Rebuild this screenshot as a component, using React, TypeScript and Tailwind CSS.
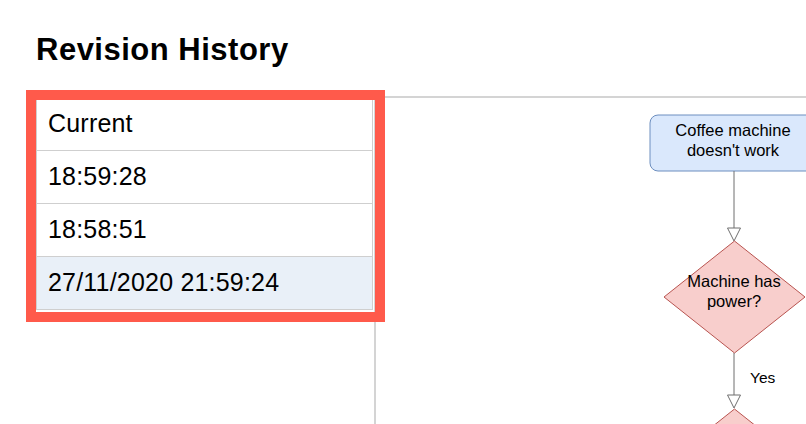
const revisions = [
  { label: "Current", selected: false },
  { label: "18:59:28", selected: false },
  { label: "18:58:51", selected: false },
  { label: "27/11/2020 21:59:24", selected: true },
];

function Diagram() {
  return (
    <svg
      className="absolute left-0 top-0"
      width="440"
      height="330"
      viewBox="0 0 440 330"
      style={{ fontFamily: '"Liberation Sans", Arial, sans-serif' }}
    >
      {/* start node */}
      <rect x="274" y="17" width="166" height="56" rx="8" fill="#dae8fc" stroke="#6c8ebf" strokeWidth="1" />
      <text x="357" y="38" fontSize="16.5" textAnchor="middle" fill="#000">
        Coffee machine
      </text>
      <text x="357" y="58" fontSize="16.5" textAnchor="middle" fill="#000">
        doesn't work
      </text>

      {/* edge 1 */}
      <line x1="358" y1="73" x2="358" y2="130" stroke="#6f6f6f" strokeWidth="1" />
      <polygon points="351.5,130 364.5,130 358,143" fill="#fff" stroke="#6f6f6f" strokeWidth="1" />

      {/* decision */}
      <polygon points="358.5,143 429,199 358.5,255 288,199" fill="#f8cecc" stroke="#b85450" strokeWidth="1" />
      <text x="358" y="189" fontSize="16.5" textAnchor="middle" fill="#000">
        Machine has
      </text>
      <text x="358" y="209" fontSize="16.5" textAnchor="middle" fill="#000">
        power?
      </text>

      {/* edge 2 */}
      <line x1="358" y1="255" x2="358" y2="297" stroke="#6f6f6f" strokeWidth="1" />
      <polygon points="351.5,297 364.5,297 358,310" fill="#fff" stroke="#6f6f6f" strokeWidth="1" />
      <text x="374" y="285" fontSize="15.5" fill="#000">
        Yes
      </text>

      {/* next decision (cut off) */}
      <polygon points="358.5,311 429,367 358.5,423 288,367" fill="#f8cecc" stroke="#b85450" strokeWidth="1" />
    </svg>
  );
}

export default function App() {
  return (
    <div
      className="relative h-[424px] w-[806px] overflow-hidden bg-white text-black"
      style={{ fontFamily: '"Liberation Sans", Arial, sans-serif' }}
    >
      <h1 className="pl-[36px] pt-[32px] text-[31px] font-bold leading-[36px] tracking-[0.5px]">
        Revision History
      </h1>

      <div className="mt-[28px] flex h-[328px]">
        <div className="w-[374px] shrink-0 pl-[36px]">
          <ul className="w-[337px] border border-[#cfcfcf]">
            {revisions.map((r, i) => (
              <li
                key={r.label}
                className={`flex h-[53px] items-center pl-[11px] text-[25px] tracking-[0.2px] ${
                  i > 0 ? "border-t border-[#cfcfcf]" : ""
                } ${r.selected ? "bg-[#e9f0f8]" : "bg-white"}`}
              >
                {r.label}
              </li>
            ))}
          </ul>
        </div>

        <div className="relative flex-1 overflow-hidden border-l-2 border-t-2 border-[#d4d4d4]">
          <Diagram />
        </div>
      </div>

      {/* highlight overlay */}
      <div className="pointer-events-none absolute left-[26px] top-[90px] h-[232px] w-[359px] border-[10px] border-[#ff5a4b]" />
    </div>
  );
}
